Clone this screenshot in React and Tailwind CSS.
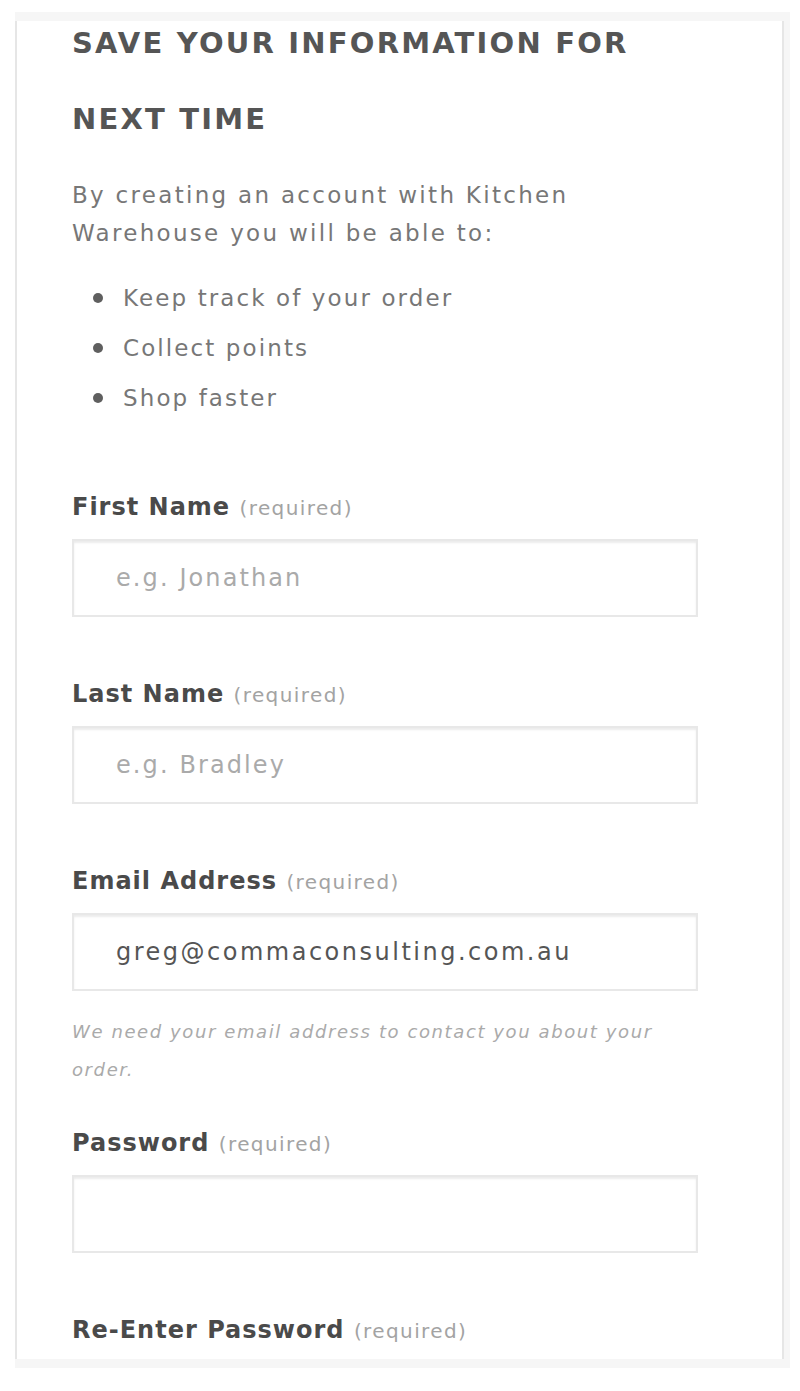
const font = { fontFamily: '"DejaVu Sans", "Open Sans", sans-serif' };

function Label({ children }) {
  return (
    <label className="block text-[24px] leading-[32px] font-bold tracking-[1px] text-[#4a4a4a]">
      {children}{' '}
      <span className="text-[20px] font-normal tracking-[1.4px] text-[#a3a3a3]">(required)</span>
    </label>
  );
}

function Field({ placeholder, value, type = 'text' }) {
  return (
    <input
      type={type}
      defaultValue={value}
      placeholder={placeholder}
      className="mt-[15px] block w-full h-[78px] border-2 border-[#e8e8e8] shadow-[inset_0_2px_2px_rgba(0,0,0,0.08)] bg-white pl-[42px] text-[24px] tracking-[2.5px] text-[#555] placeholder:tracking-[2.1px] placeholder:text-[#aaa] outline-none"
    />
  );
}

export default function App() {
  return (
    <div className="min-h-screen bg-white pt-[12px] pl-[15px]" style={font}>
      <div className="w-[775px] bg-[#f6f6f6] py-[9px] pr-[6px]">
        <div className="flow-root bg-white border-x-2 border-[#e6e6e6] pl-[55px] pr-[84px] pb-[12px]">
          <h2 className="-mt-[16px] text-[29px] leading-[76px] font-bold tracking-[2.2px] text-[#555] uppercase">
            Save your information for next time
          </h2>

          <p className="mt-[19px] text-[23px] leading-[38px] tracking-[2.3px] text-[#777]">
            By creating an account with Kitchen Warehouse you will be able to:
          </p>

          <ul className="mt-[21px] text-[23px] leading-[50px] tracking-[2.1px] text-[#777]">
            {['Keep track of your order', 'Collect points', 'Shop faster'].map((item) => (
              <li key={item} className="flex items-center">
                <span className="w-[51px] flex justify-center">
                  <span className="w-[10px] h-[10px] rounded-full bg-[#5f5f5f]" />
                </span>
                {item}
              </li>
            ))}
          </ul>

          <div className="mt-[68px]">
            <Label>First Name</Label>
            <Field placeholder="e.g. Jonathan" />
          </div>

          <div className="mt-[61px]">
            <Label>Last Name</Label>
            <Field placeholder="e.g. Bradley" />
          </div>

          <div className="mt-[61px]">
            <Label>Email Address</Label>
            <Field type="email" value="greg@commaconsulting.com.au" />
            <p className="mt-[22px] text-[18px] leading-[38px] italic tracking-[1.6px] text-[#aaa]">
              We need your email address to contact you about your order.
            </p>
          </div>

          <div className="mt-[38px]">
            <Label>Password</Label>
            <Field type="password" />
          </div>

          <div className="mt-[61px]">
            <Label>Re-Enter Password</Label>
          </div>
        </div>
      </div>
    </div>
  );
}
